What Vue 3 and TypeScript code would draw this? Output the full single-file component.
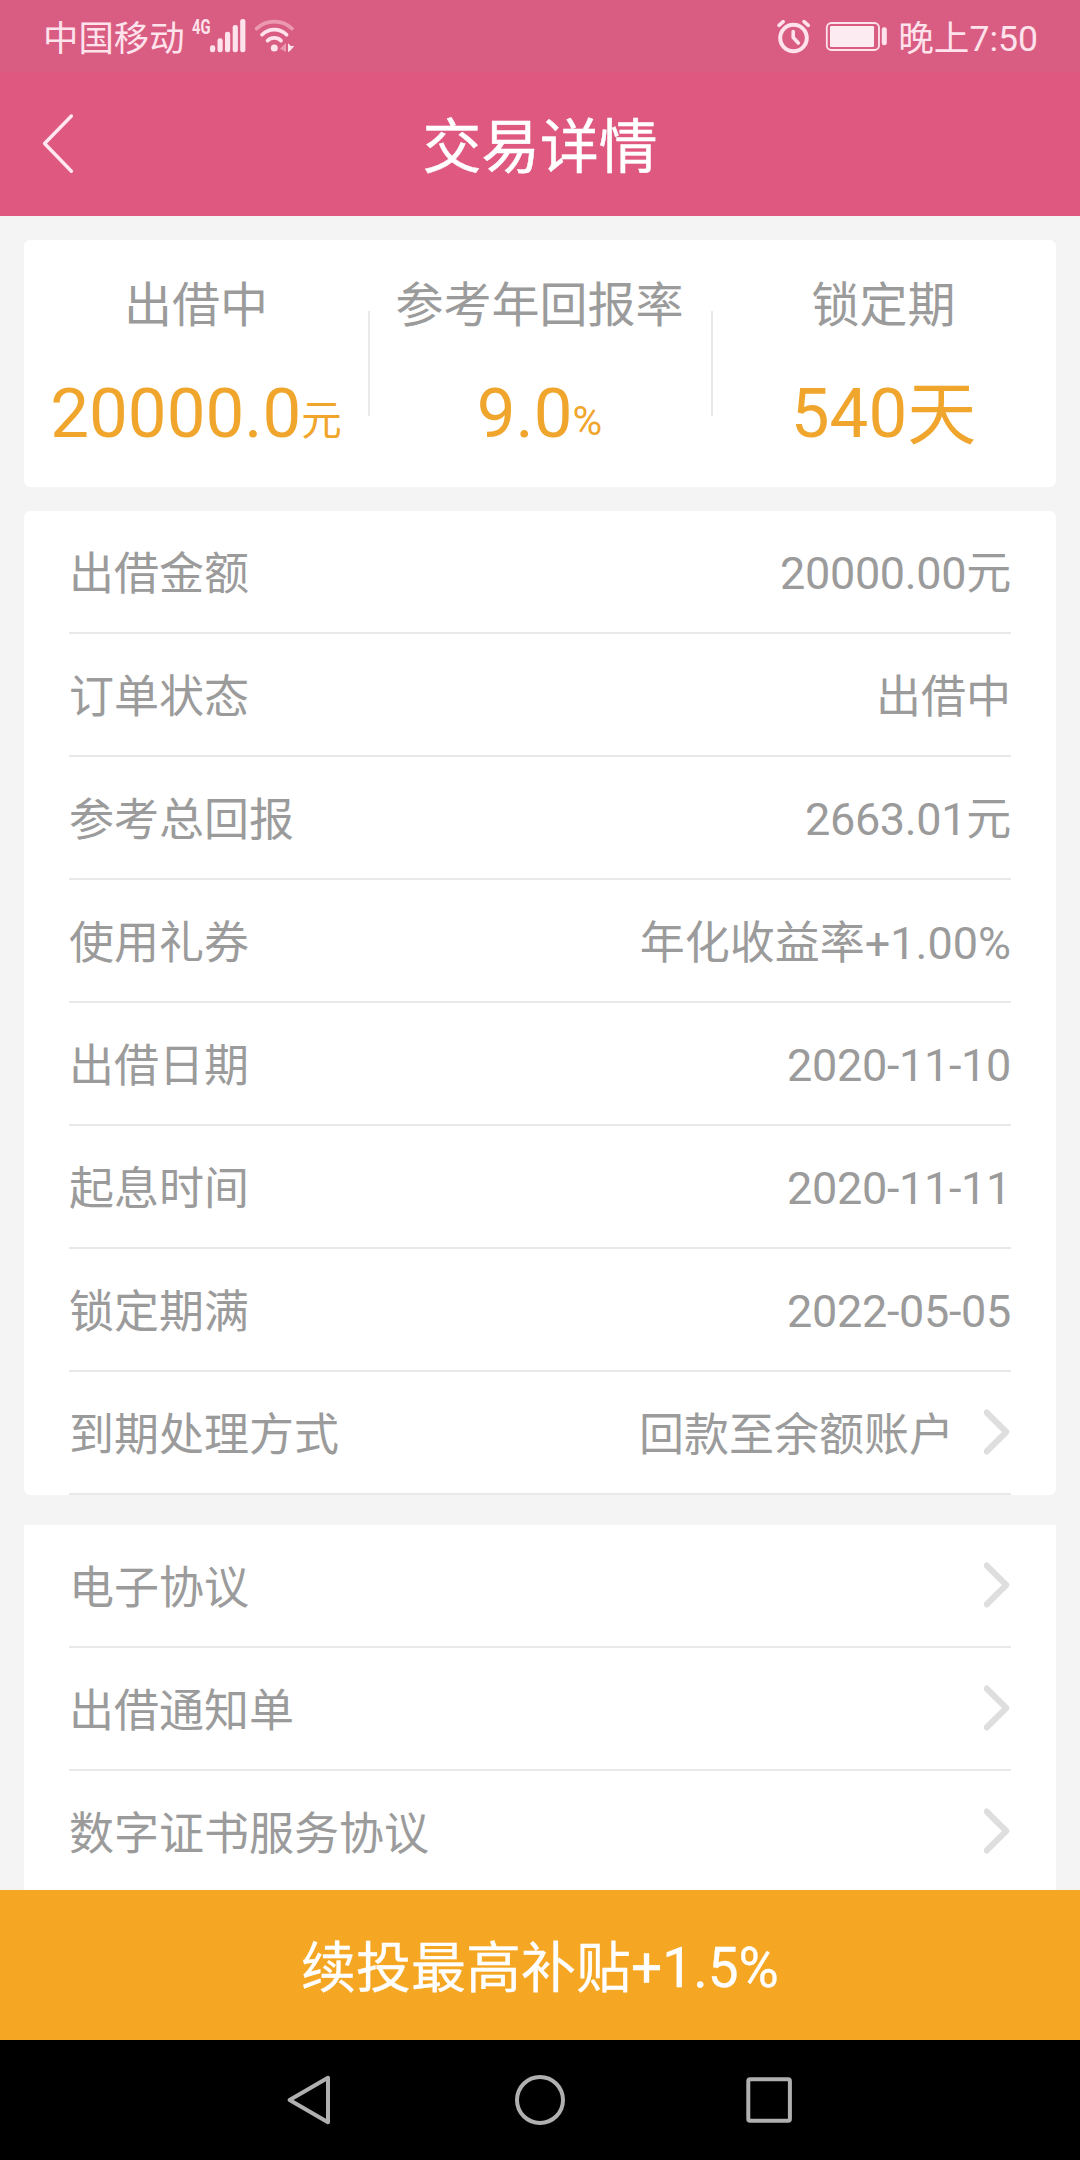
<script setup lang="ts">
interface Stat {
  label: string
  value: string
  unit: string
  large?: boolean
}

interface Row {
  label: string
  value?: string
  link?: boolean
}

const stats: Stat[] = [
  { label: '出借中', value: '20000.0', unit: '元' },
  { label: '参考年回报率', value: '9.0', unit: '%' },
  { label: '锁定期', value: '540', unit: '天', large: true },
]

const details: Row[] = [
  { label: '出借金额', value: '20000.00元' },
  { label: '订单状态', value: '出借中' },
  { label: '参考总回报', value: '2663.01元' },
  { label: '使用礼券', value: '年化收益率+1.00%' },
  { label: '出借日期', value: '2020-11-10' },
  { label: '起息时间', value: '2020-11-11' },
  { label: '锁定期满', value: '2022-05-05' },
  { label: '到期处理方式', value: '回款至余额账户', link: true },
]

const documents: Row[] = [
  { label: '电子协议', link: true },
  { label: '出借通知单', link: true },
  { label: '数字证书服务协议', link: true },
]

const isNumeric = (text = ''): boolean => /^\d/.test(text)
</script>

<template>
  <div class="screen">
    <div class="status">
      <div class="status-side">
        <span class="carrier">中国移动</span>
        <svg class="signal" width="106" height="72" viewBox="190 0 106 72">
          <text x="192" y="34" font-size="20.5" font-weight="700" textLength="18.5" lengthAdjust="spacingAndGlyphs" fill="#fee2ec">4G</text>
          <g fill="#fee2ec">
            <rect x="210" y="45.3" width="5.2" height="6.9" rx="2.2" />
            <rect x="217.5" y="38.3" width="5.2" height="13.9" rx="2.2" />
            <rect x="225" y="31.7" width="5.2" height="20.5" rx="2.2" />
            <rect x="232.7" y="25" width="5.2" height="27.2" rx="2.2" />
            <rect x="240.2" y="19" width="5.2" height="33.2" rx="2.2" />
            <circle cx="274.3" cy="48" r="3.5" />
            <path d="M288 43.3V52.3L290.5 50.5L294.3 46L291 46Z" />
          </g>
          <path d="M280 48.8L286 43V52Z" fill="#eb98b3" />
          <g fill="none" stroke-width="3.7" stroke-linecap="round">
            <path d="M256.6 28.6A26 26 0 0 1 292 28.6" stroke="#eb98b3" />
            <path d="M262 34.8A17.4 17.4 0 0 1 286.6 34.8" stroke="#fee2ec" />
            <path d="M267.6 40.6A9.6 9.6 0 0 1 281 40.6" stroke="#fee2ec" />
          </g>
        </svg>
      </div>
      <div class="status-side">
        <svg class="power" width="112" height="72" viewBox="776 0 112 72">
          <g fill="none" stroke="#fee2ec" stroke-linecap="round" stroke-linejoin="round">
            <circle cx="793.5" cy="38" r="13.3" stroke-width="4" />
            <path d="M793.2 31.5V37.5L798.3 43" stroke-width="3.6" />
            <path d="M779 25.3L783.2 21.6M804 21.6L808.3 25.3" stroke-width="3.6" />
            <rect x="826.8" y="23" width="52.2" height="27" rx="4.5" stroke-width="1.8" />
          </g>
          <rect x="830" y="26" width="44" height="21" rx="1.2" fill="#fcecf1" />
          <rect x="881.8" y="27.3" width="5" height="18" rx="2.2" fill="#fee2ec" />
        </svg>
        <span>晚上7:50</span>
      </div>
    </div>

    <header class="header">
      <svg class="back" width="34" height="64" viewBox="42 112 34 64">
        <path d="M71.4 116L44.6 143.5L71.4 171.2" fill="none" stroke="#ffe6ef" stroke-width="3.5" stroke-linecap="round" stroke-linejoin="round" />
      </svg>
      <h1>交易详情</h1>
    </header>

    <main class="content">
      <section class="card stats">
        <div v-for="stat in stats" :key="stat.label" class="stat">
          <div class="stat-label">{{ stat.label }}</div>
          <div class="stat-value">{{ stat.value }}<span class="unit" :class="{ large: stat.large }">{{ stat.unit }}</span></div>
        </div>
      </section>

      <section class="card list">
        <div v-for="row in details" :key="row.label" class="row">
          <span class="text">{{ row.label }}</span>
          <span class="text value" :class="{ numeric: isNumeric(row.value) }">{{ row.value }}</span>
          <svg v-if="row.link" class="arrow" width="27" height="46" viewBox="0 0 27 46">
            <path d="M2.6 3.5L22.3 23L2.6 42.5" />
          </svg>
        </div>
      </section>

      <section class="card list documents">
        <div v-for="row in documents" :key="row.label" class="row">
          <span class="text">{{ row.label }}</span>
          <svg class="arrow" width="27" height="46" viewBox="0 0 27 46">
            <path d="M2.6 3.5L22.3 23L2.6 42.5" />
          </svg>
        </div>
      </section>
    </main>

    <div class="action">续投最高补贴+1.5%</div>

    <nav class="nav">
      <svg width="50" height="50" viewBox="0 0 50 50"><path d="M3.6 25L42 2.8V47.2Z" /></svg>
      <svg width="50" height="50" viewBox="0 0 50 50"><circle cx="25" cy="25" r="23" /></svg>
      <svg width="50" height="50" viewBox="0 0 50 50"><rect x="4.3" y="4.3" width="41.6" height="41.4" rx="1.8" /></svg>
    </nav>
  </div>
</template>

<style>
body {
  margin: 0;
}
</style>

<style scoped>
.screen {
  width: 1080px;
  height: 2160px;
  display: flex;
  flex-direction: column;
  overflow: hidden;
  background: #f4f4f4;
  font-family: Roboto, "Noto Sans CJK SC", sans-serif;
  color: #9b9b9b;
}

svg {
  display: block;
  flex: none;
}

.status {
  flex: none;
  height: 72px;
  padding: 0 42px 0 43px;
  display: flex;
  justify-content: space-between;
  background: #d95d82;
  color: #fee2ec;
  font-size: 35.6px;
  line-height: 78px;
}

.status-side {
  display: flex;
}

.carrier {
  width: 147px;
  font-size: 35.4px;
}

.power {
  margin-right: 10px;
}

.header {
  flex: none;
  height: 144px;
  display: grid;
  grid-template-columns: 76px 1fr 76px;
  align-items: center;
  background: #df587f;
}

.back {
  margin-left: 42px;
}

h1 {
  margin: 0;
  padding-top: 7px;
  font-size: 58.8px;
  line-height: 137px;
  font-weight: 400;
  text-align: center;
  color: #fff;
  -webkit-text-stroke: 0.5px #fff;
}

.content {
  flex: 1;
  min-height: 0;
  overflow: hidden;
  padding: 24px 24px 0;
}

.card {
  border-radius: 6px;
  background: #fff;
}

.stats {
  height: 247px;
  margin-bottom: 24px;
  display: grid;
  grid-template-columns: 344px 343px 345px;
}

.stat {
  text-align: center;
  white-space: nowrap;
}

.stat + .stat {
  background: linear-gradient(#e9e9e9, #e9e9e9) 0 71px / 2px 105px no-repeat;
}

.stat-label {
  padding-top: 32px;
  font-size: 48px;
  line-height: 68px;
}

.stat-value {
  margin-top: 24px;
  font-size: 69px;
  line-height: 100px;
  color: #f0a52d;
}

.unit {
  font-size: 40.5px;
  line-height: 1;
  position: relative;
  top: -2px;
}

.unit.large {
  font-size: inherit;
  top: 2px;
}

.list {
  padding: 0 45px;
}

.row {
  box-sizing: border-box;
  height: 123px;
  border-bottom: 2px solid #e9e9e9;
  display: flex;
  align-items: center;
  justify-content: space-between;
  font-size: 45px;
  white-space: nowrap;
}

.text {
  padding-top: 6px;
  line-height: 115px;
}

.value {
  margin-left: auto;
}

.value.numeric {
  padding-top: 4px;
  line-height: 117px;
  letter-spacing: -0.32px;
}

.arrow {
  margin-bottom: 2px;
}

.value + .arrow {
  margin-left: 30px;
}

.arrow path {
  fill: none;
  stroke: #dedede;
  stroke-width: 6;
  stroke-linecap: round;
  stroke-linejoin: round;
}

.documents {
  margin-top: 30px;
  border-radius: 0;
}

.action {
  box-sizing: border-box;
  flex: none;
  height: 150px;
  padding-top: 6px;
  background: #f5a623;
  color: #fff;
  font-size: 55px;
  line-height: 144px;
  text-align: center;
  -webkit-text-stroke: 0.3px #fff;
}

.nav {
  flex: none;
  height: 120px;
  display: flex;
  align-items: center;
  justify-content: center;
  gap: 179px;
  background: #000;
  fill: none;
  stroke: #b0b0b0;
  stroke-width: 4;
  stroke-linejoin: round;
}
</style>
